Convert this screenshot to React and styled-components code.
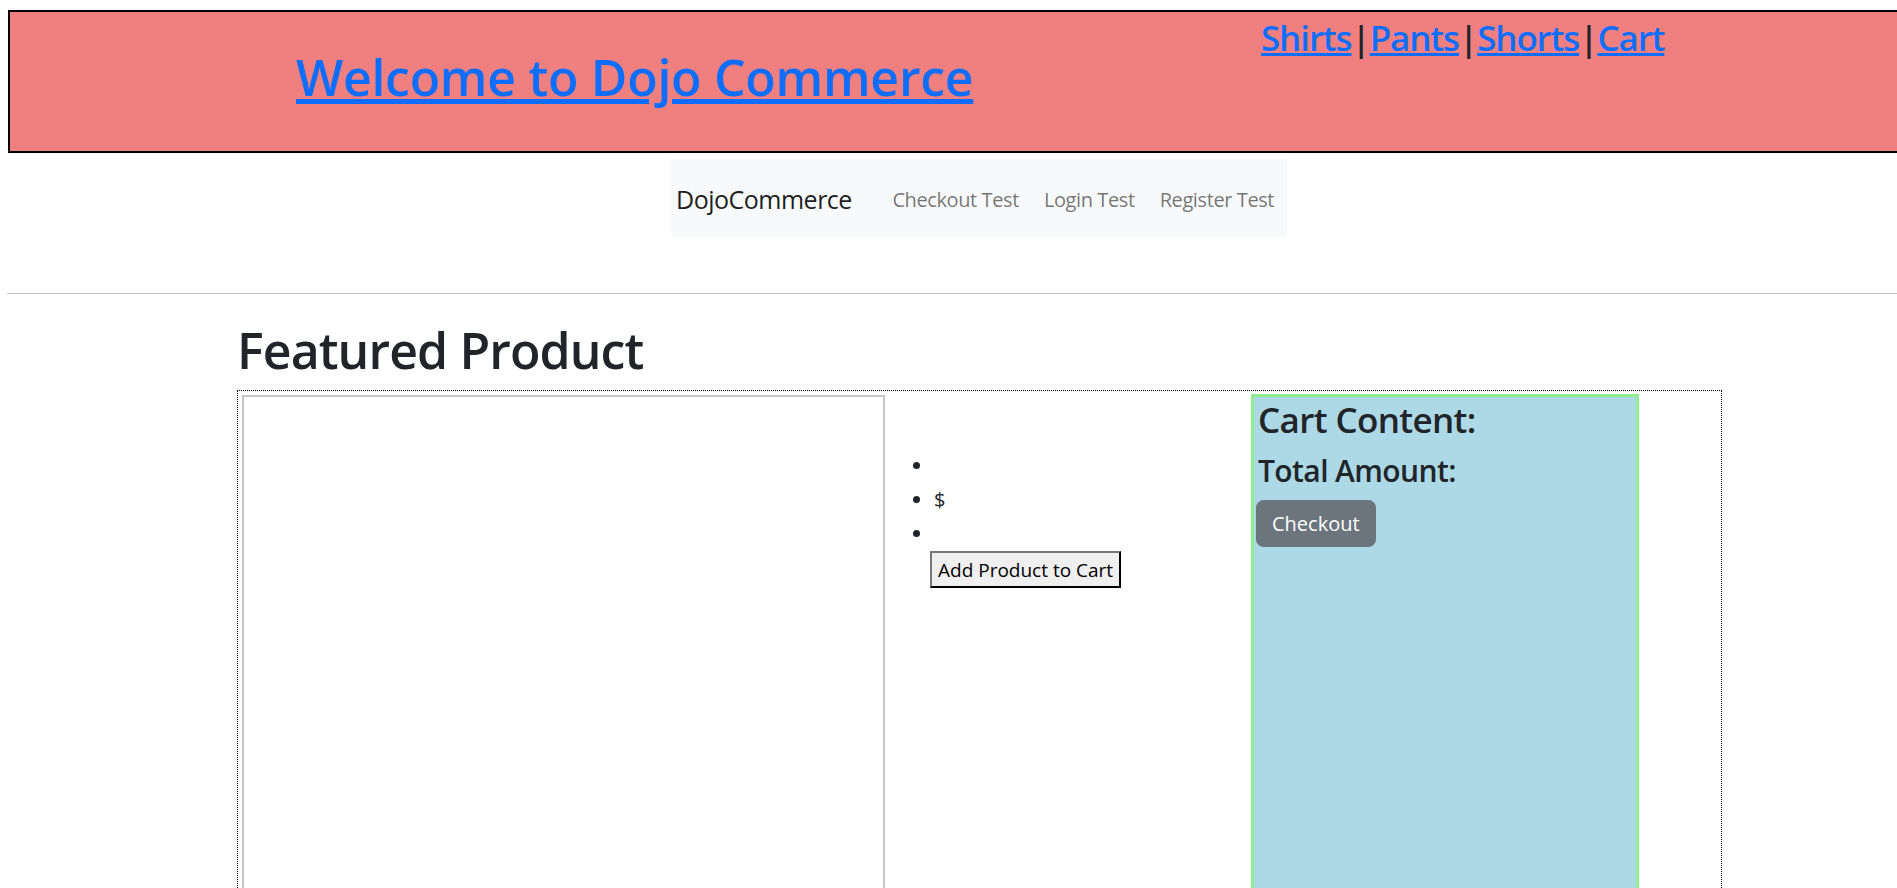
import React from "react";
import styled, { createGlobalStyle } from "styled-components";

const GlobalStyle = createGlobalStyle`
  html {
    scrollbar-width: none;
  }
  body {
    margin: 0;
    overflow-x: hidden;
    font-family: "Open Sans", "Noto Sans", sans-serif;
    font-size: 20px;
    line-height: 1.5;
    color: #212529;
    background: #fff;
  }
  a {
    color: #0d6efd;
  }
`;

const Page = styled.div`
  padding: 8px 0 8px 8px;
`;

const Banner = styled.header`
  display: flex;
  align-items: flex-start;
  box-sizing: border-box;
  height: 143px;
  margin: 2px -60px 0 0;
  padding-left: 286px;
  border: 2px solid #000;
  background: lightcoral;
`;

const BannerTitle = styled.h1`
  flex: 0 0 965px;
  margin: 35px 0 0;
  font-size: 50px;
  font-weight: 600;
  line-height: 1.2;
  letter-spacing: -0.006em;
`;

const ShopLinks = styled.h3`
  margin: 5px 0 0;
  font-size: 35px;
  font-weight: 600;
  line-height: 1.2;
  letter-spacing: -0.032em;
  white-space: nowrap;
`;

const Sep = styled.span`
  color: #212529;
`;

const TopNav = styled.nav`
  display: flex;
  align-items: center;
  box-sizing: border-box;
  width: 616px;
  height: 78px;
  margin: 6px 0 0 663px;
  padding: 4px 5px 0;
  background: #f8f9fa;
  white-space: nowrap;
`;

const Brand = styled.a`
  margin-right: 28px;
  font-size: 25px;
  letter-spacing: -0.02em;
  color: rgba(0, 0, 0, 0.9);
  text-decoration: none;
`;

const NavLink = styled.a`
  flex-shrink: 0;
  padding: 0 12.5px;
  font-size: 20px;
  letter-spacing: -0.02em;
  color: rgba(0, 0, 0, 0.55);
  text-decoration: none;
`;

const Divider = styled.hr`
  margin: 56px 0 0 -1px;
  border: 0;
  border-top: 1px solid #c4c4c4;
`;

const Main = styled.main`
  width: 1485px;
  margin-left: 229px;
`;

const PageTitle = styled.h1`
  margin: 26px 0 10px;
  font-size: 50px;
  font-weight: 600;
  line-height: 1.2;
  letter-spacing: -0.018em;
`;

const ProductBox = styled.section`
  display: flex;
  align-items: flex-start;
  height: 820px;
  padding: 4px 0 0 4px;
  border: 1px dotted #000;
`;

const ImageFrame = styled.div`
  box-sizing: border-box;
  flex: 0 0 643px;
  height: 760px;
  border: 2px solid #c6c6c6;
`;

const Details = styled.div`
  box-sizing: border-box;
  flex: 0 0 366px;
  padding-left: 9px;
`;

const InfoList = styled.ul`
  margin: 54px 0 0;
  padding-left: 40px;

  li {
    height: 34px;
    line-height: 34px;
  }
`;

const AddButton = styled.button`
  margin-left: 36px;
  padding: 1.5px 6px;
  font-family: inherit;
  font-size: 19px;
  line-height: 30px;
  color: #000;
  background: #efefef;
  border: 2px solid;
  border-color: #767676 #000 #000 #767676;
`;

const CartPanel = styled.aside`
  box-sizing: border-box;
  flex: 0 0 388px;
  height: 760px;
  margin-top: -1px;
  padding: 2px;
  border: 3px solid lightgreen;
  background: lightblue;
`;

const CartHeading = styled.h3`
  margin: 0 0 12px 2px;
  font-size: 35px;
  font-weight: 600;
  line-height: 1.2;
  letter-spacing: -0.018em;
`;

const CartTotal = styled.h4`
  margin: 0 0 11px 2px;
  font-size: 30px;
  font-weight: 600;
  line-height: 1.2;
  letter-spacing: -0.02em;
`;

const CheckoutButton = styled.button`
  padding: 7.5px 15px;
  font-family: inherit;
  font-size: 20px;
  line-height: 1.5;
  color: #fff;
  background: #6c757d;
  border: 1px solid #6c757d;
  border-radius: 7.5px;
`;

export default function App() {
  return (
    <Page>
      <GlobalStyle />
      <Banner>
        <BannerTitle>
          <a href="#">Welcome to Dojo Commerce</a>
        </BannerTitle>
        <ShopLinks>
          <a href="#">Shirts</a>
          <Sep>|</Sep>
          <a href="#">Pants</a>
          <Sep>|</Sep>
          <a href="#">Shorts</a>
          <Sep>|</Sep>
          <a href="#">Cart</a>
        </ShopLinks>
      </Banner>

      <TopNav>
        <Brand href="#">DojoCommerce</Brand>
        <NavLink href="#">Checkout Test</NavLink>
        <NavLink href="#">Login Test</NavLink>
        <NavLink href="#">Register Test</NavLink>
      </TopNav>

      <Divider />

      <Main>
        <PageTitle>Featured Product</PageTitle>
        <ProductBox>
          <ImageFrame />
          <Details>
            <InfoList>
              <li></li>
              <li>$</li>
              <li></li>
            </InfoList>
            <AddButton>Add Product to Cart</AddButton>
          </Details>
          <CartPanel>
            <CartHeading>Cart Content:</CartHeading>
            <CartTotal>Total Amount:</CartTotal>
            <CheckoutButton>Checkout</CheckoutButton>
          </CartPanel>
        </ProductBox>
      </Main>
    </Page>
  );
}
